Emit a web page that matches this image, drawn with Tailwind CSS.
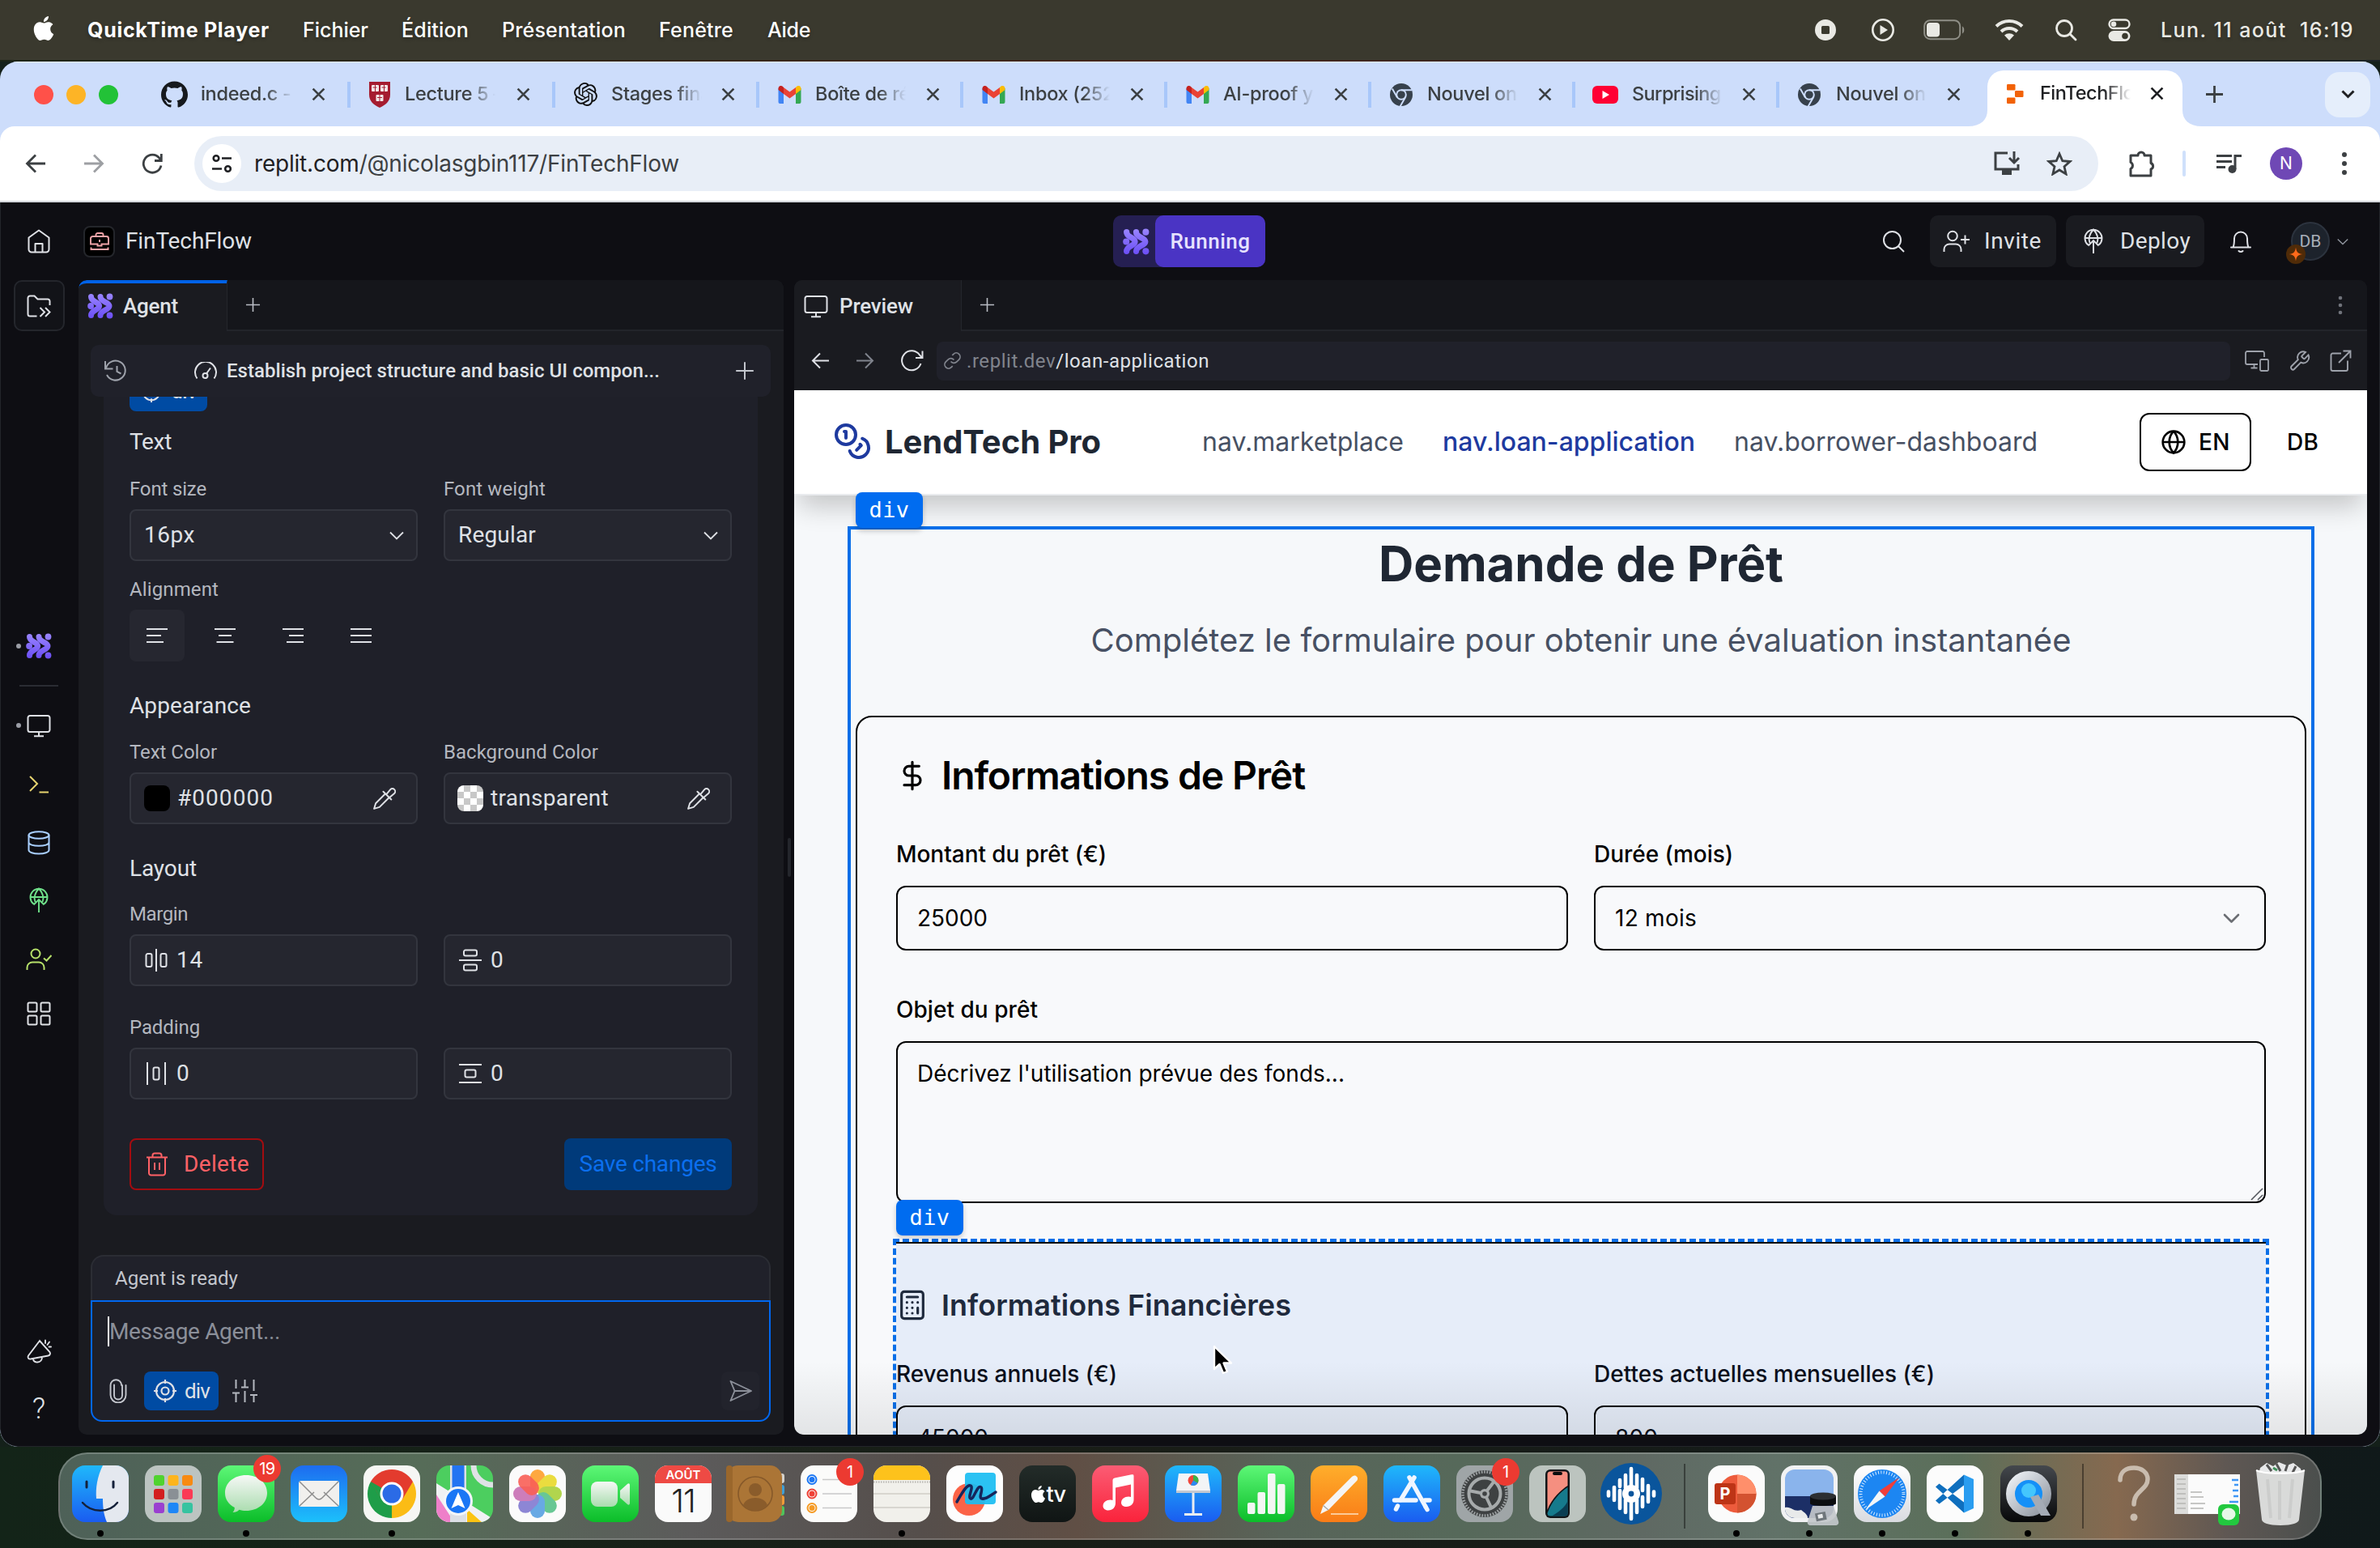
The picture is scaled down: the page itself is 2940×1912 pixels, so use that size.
<!DOCTYPE html>
<html lang="fr">
<head>
<meta charset="utf-8">
<title>FinTechFlow - Replit</title>
<script src="https://cdn.jsdelivr.net/npm/@tailwindcss/browser@4"></script>
</head>
<body class="w-[2940px] h-[1912px] overflow-hidden bg-[#14201a] font-[Inter,sans-serif]">

<!-- Shared symbols -->
<svg class="absolute w-0 h-0" aria-hidden="true">
  <defs>
    <linearGradient id="violet" gradientUnits="userSpaceOnUse" x1="0" y1="0" x2="0" y2="32"><stop offset="0" stop-color="#9a86ff"/><stop offset="1" stop-color="#6a4df5"/></linearGradient>
    <linearGradient id="gBlue" x1="0" y1="0" x2="0" y2="1"><stop offset="0" stop-color="#1d6cf0"/><stop offset="1" stop-color="#1cc0fb"/></linearGradient>
    <linearGradient id="gBlueDown" x1="0" y1="0" x2="0" y2="1"><stop offset="0" stop-color="#1fb8fb"/><stop offset="1" stop-color="#1a5cf0"/></linearGradient>
    <linearGradient id="gGreen" x1="0" y1="0" x2="0" y2="1"><stop offset="0" stop-color="#5df777"/><stop offset="1" stop-color="#0bbd29"/></linearGradient>
    <linearGradient id="gRed" x1="0" y1="0" x2="0" y2="1"><stop offset="0" stop-color="#fb5c74"/><stop offset="1" stop-color="#fa233b"/></linearGradient>
    <linearGradient id="gOrange" x1="0" y1="0" x2="0" y2="1"><stop offset="0" stop-color="#ffae2b"/><stop offset="1" stop-color="#f97c17"/></linearGradient>
    <linearGradient id="gWhite" x1="0" y1="0" x2="0" y2="1"><stop offset="0" stop-color="#ffffff"/><stop offset="1" stop-color="#d9dbe0"/></linearGradient>
    <linearGradient id="gDark" x1="0" y1="0" x2="0" y2="1"><stop offset="0" stop-color="#44484d"/><stop offset="1" stop-color="#070809"/></linearGradient>
    <linearGradient id="gGlass" x1="0" y1="0" x2="0" y2="1"><stop offset="0" stop-color="#f6f8f6"/><stop offset="1" stop-color="#a9dcae"/></linearGradient>
    <linearGradient id="gSilver" x1="0" y1="0" x2="1" y2="1"><stop offset="0" stop-color="#eef1f5"/><stop offset="1" stop-color="#8d949e"/></linearGradient>
    <clipPath id="tile"><rect x="0" y="0" width="70" height="70" rx="16"/></clipPath>
    <symbol id="agent" viewBox="0 0 32 32"><g stroke="url(#violet)" stroke-width="7" stroke-linecap="round" fill="none"><path d="M4.500 4.500C4.500 11 14.600 11 14.600 16S4.500 21 4.500 27.500"/><path d="M16 4.500C16 11 27 11 27 16S16 21 16 27.500"/></g><g fill="url(#violet)"><circle cx="27.500" cy="4.500" r="3.900"/><circle cx="4.100" cy="16" r="3.900"/><circle cx="27.500" cy="27.500" r="3.900"/></g></symbol>
    <symbol id="close" viewBox="0 0 16 16"><path d="M1.500 1.500l13 13M14.500 1.500l-13 13" stroke="currentColor" stroke-width="2.500" fill="none"/></symbol>
    <symbol id="plus" viewBox="0 0 20 20"><path d="M10 1v18M1 10h18" stroke="currentColor" stroke-width="1.700" fill="none"/></symbol>
    <symbol id="gmail" viewBox="0 0 28 22"><path d="M0 3v17a2 2 0 0 0 2 2h4.500V8z" fill="#4285f4"/><path d="M21.500 8v14H26a2 2 0 0 0 2-2V3z" fill="#34a853"/><path d="M21.500 2v8L28 5V3.200C28 .3 24.800-1 22.700.8z" fill="#fbbc04"/><path d="M6.500 10V2l7.500 5.600L21.500 2v8L14 15.500z" fill="#ea4335"/><path d="M0 3.200V5l6.500 5V2L5.300.8C3.200-1 0 .3 0 3.200z" fill="#c5221f"/></symbol>
    <symbol id="chromeMono" viewBox="0 0 28 28"><circle cx="14" cy="14" r="14" fill="#37414c"/><circle cx="14" cy="14" r="6.800" fill="#cdddfb"/><circle cx="14" cy="14" r="4.800" fill="#37414c"/><path d="M14 8.200h13M9 17.200L2.800 6.500M19 17.200l-6.300 11" stroke="#cdddfb" stroke-width="2"/></symbol>
    <symbol id="deploy" viewBox="0 0 32 32"><g fill="none" stroke="currentColor" stroke-width="1.900"><path d="M9.500 20.500A10.500 10.500 0 1 1 22.500 20.500M5.600 12h20.800M11.500 18c-1.500-4-1.500-10 4.500-16.500C22 8 22 14 20.500 18M16 31V15M9.500 21.500L16 15l6.500 6.500"/></g></symbol>
    <symbol id="monitor" viewBox="0 0 30 30"><path d="M4 3h22a2.500 2.500 0 0 1 2.500 2.500v15A2.500 2.500 0 0 1 26 23H4a2.500 2.500 0 0 1-2.500-2.500v-15A2.500 2.500 0 0 1 4 3zM15 23v5M9 28.200h12" fill="none" stroke="currentColor" stroke-width="2"/></symbol>
    <symbol id="chev" viewBox="0 0 18 10"><path d="M1 1l8 8 8-8" fill="none" stroke="currentColor" stroke-width="1.800"/></symbol>
    <symbol id="target" viewBox="0 0 28 28"><g fill="none" stroke="currentColor" stroke-width="2.200"><circle cx="14" cy="14" r="11"/><circle cx="14" cy="14" r="4.500"/><path d="M14 0v5M14 23v5M0 14h5M23 14h5"/></g></symbol>
    <symbol id="picker" viewBox="0 0 28 28"><path d="M15.500 8L4 19.500 2 26l6.500-2L20 12.500M13 5.500l9.500 9.500M16.500 9l5-6a3.300 3.300 0 0 1 4.700 4.700l-6 5" fill="none" stroke="currentColor" stroke-width="1.900" stroke-linejoin="round" stroke-linecap="round"/></symbol>
    <symbol id="github" viewBox="0 0 24 24"><path fill="currentColor" d="M12 .297c-6.630 0-12 5.373-12 12 0 5.303 3.438 9.800 8.205 11.385.6.113.82-.258.82-.577 0-.285-.01-1.040-.015-2.040-3.338.724-4.042-1.610-4.042-1.610C4.422 18.070 3.633 17.700 3.633 17.700c-1.087-.744.084-.729.084-.729 1.205.084 1.838 1.236 1.838 1.236 1.070 1.835 2.809 1.305 3.495.998.108-.776.417-1.305.76-1.605-2.665-.3-5.466-1.332-5.466-5.930 0-1.310.465-2.380 1.235-3.220-.135-.303-.54-1.523.105-3.176 0 0 1.005-.322 3.300 1.230.96-.267 1.980-.399 3-.405 1.020.006 2.040.138 3 .405 2.280-1.552 3.285-1.230 3.285-1.230.645 1.653.24 2.873.12 3.176.765.84 1.230 1.910 1.230 3.220 0 4.610-2.805 5.625-5.475 5.920.42.36.81 1.096.81 2.220 0 1.606-.015 2.896-.015 3.286 0 .315.21.69.825.57C20.565 22.092 24 17.592 24 12.297c0-6.627-5.373-12-12-12"/></symbol>
    <symbol id="apple" viewBox="0 0 24 24"><path fill="currentColor" d="M12.152 6.896c-.948 0-2.415-1.078-3.960-1.040-2.040.027-3.910 1.183-4.961 3.014-2.117 3.675-.546 9.103 1.519 12.090 1.013 1.454 2.208 3.090 3.792 3.039 1.520-.065 2.090-.987 3.935-.987 1.831 0 2.350.987 3.960.948 1.637-.026 2.676-1.480 3.676-2.948 1.156-1.688 1.636-3.325 1.662-3.415-.039-.013-3.182-1.221-3.220-4.857-.026-3.040 2.480-4.494 2.597-4.559-1.429-2.090-3.623-2.324-4.390-2.376-2-.156-3.675 1.090-4.610 1.090zM15.530 3.830c.843-1.012 1.400-2.427 1.245-3.830-1.207.052-2.662.805-3.532 1.818-.78.896-1.454 2.338-1.273 3.714 1.338.104 2.715-.688 3.559-1.701"/></symbol>
  </defs>
</svg>

<!-- macOS menu bar -->
<header class="h-[74px] bg-[#3a392e] flex items-center text-white text-[26px] font-medium leading-none whitespace-nowrap [text-shadow:0_2px_4px_rgba(0,0,0,.3)]">
  <svg class="w-[30px] h-[32px] ml-[39px] -mt-1 shrink-0"><use href="#apple"/></svg>
  <span class="ml-[39px] font-bold text-[25px]" data-w="225">QuickTime Player</span>
  <span class="ml-[41px] text-[25px]" data-w="81">Fichier</span>
  <span class="ml-[41px] text-[25px]" data-w="83">Édition</span>
  <span class="ml-[41px] text-[25px]" data-w="153">Présentation</span>
  <span class="ml-[41px] text-[25px]" data-w="92">Fenêtre</span>
  <span class="ml-[42px] text-[25px]" data-w="53">Aide</span>
  <div class="ml-auto mr-[32px] flex items-center text-[#e9e9e4]">
    <svg class="w-[28px] h-[28px]" viewBox="0 0 28 28"><circle cx="14" cy="14" r="13" fill="currentColor"/><rect x="9" y="9" width="10" height="10" rx="1.500" fill="#3a392e"/></svg>
    <svg class="w-[30px] h-[30px] ml-[42px]" viewBox="0 0 30 30"><circle cx="15" cy="15" r="12.700" fill="none" stroke="currentColor" stroke-width="2.600"/><path d="M11.500 9v12l9.500-6z" fill="currentColor"/></svg>
    <svg class="w-[52px] h-[26px] ml-[35px]" viewBox="0 0 52 26"><rect x="1.200" y="1.200" width="44" height="23" rx="7" fill="none" stroke="#8f8f87" stroke-width="2"/><rect x="4" y="4" width="16" height="17.500" rx="4" fill="currentColor"/><path d="M48 8.500c3 1.500 3 7.500 0 9z" fill="#8f8f87"/></svg>
    <svg class="w-[36px] h-[28px] ml-[36px]" viewBox="0 0 36 28"><g fill="none" stroke="currentColor" stroke-width="4"><path d="M2 9.500a23 23 0 0 1 32 0"/><path d="M8 16a14.500 14.500 0 0 1 20 0"/></g><path d="M18 27l-6-6.500a9 9 0 0 1 12 0z" fill="currentColor"/></svg>
    <svg class="w-[28px] h-[28px] ml-[38px]" viewBox="0 0 28 28"><g fill="none" stroke="currentColor" stroke-width="2.800" stroke-linecap="round"><circle cx="12" cy="12" r="9.500"/><path d="M19 19l7 7"/></g></svg>
    <svg class="w-[28px] h-[28px] ml-[38px]" viewBox="0 0 28 28"><rect x="1.500" y="1.500" width="25" height="10.500" rx="5.200" fill="none" stroke="currentColor" stroke-width="2.400"/><circle cx="7" cy="6.800" r="3.300" fill="currentColor"/><rect x="0.500" y="15" width="27" height="13" rx="6.500" fill="currentColor"/><circle cx="21" cy="21.500" r="3.800" fill="#3a392e"/></svg>
    <span class="ml-[37px] text-[25px] whitespace-pre" data-w="239">Lun. 11 août  16:19</span>
  </div>
</header>
<div class="h-[2px] bg-linear-to-r from-[#1c2416] via-[#45261c] to-[#1b2326]"></div>

<!-- Browser window -->
<div class="h-[1711px] rounded-[22px] overflow-hidden flex flex-col bg-[#cdddfb]">

  <!-- Tab strip -->
  <div class="h-[80px] flex shrink-0 items-center text-[#3c4043] text-[23.500px] font-medium leading-none border-t border-[#e3ecfd] whitespace-nowrap">
    <div class="flex gap-[16px] pl-[42px] w-[180px] shrink-0"><i class="size-[24px] rounded-full bg-[#ff5149]"></i><i class="size-[24px] rounded-full bg-[#fdb426]"></i><i class="size-[24px] rounded-full bg-[#22c237]"></i></div>
    <div class="w-[253px] h-[32px] border-r-4 border-[#a8c7fa] flex items-center shrink-0">
      <svg class="size-[33px] ml-[19px] text-[#16191d]"><use href="#github"/></svg><span class="ml-[16px] w-[114px] h-[32px] leading-[30px] overflow-hidden tracking-[-0.300px] mask-r-from-70% mask-r-to-100%">indeed.c - </span><svg class="size-[17px] ml-[23px]"><use href="#close"/></svg>
    </div>
    <div class="w-[253px] h-[32px] border-r-4 border-[#a8c7fa] flex items-center shrink-0">
      <svg class="w-[26px] h-[32px] ml-[23px]" viewBox="0 0 26 32"><path d="M0 0h26v16c0 8-6 13-13 16C6 29 0 24 0 16z" fill="#a51c30"/><g fill="#f3e9ea"><rect x="3" y="4" width="9" height="8" rx="1"/><rect x="14" y="4" width="9" height="8" rx="1"/><rect x="8.500" y="16" width="9" height="8" rx="1"/></g><g stroke="#a51c30" stroke-width="1"><path d="M7.500 4v8M18.500 4v8M13 16v8M4.500 7h5M15.500 7h5M10 19.500h6"/></g></svg><span class="ml-[18px] w-[112px] h-[32px] leading-[30px] overflow-hidden tracking-[-0.300px] mask-r-from-70% mask-r-to-100%">Lecture 5 –</span><svg class="size-[17px] ml-[26px]"><use href="#close"/></svg>
    </div>
    <div class="w-[252px] h-[32px] border-r-4 border-[#a8c7fa] flex items-center shrink-0">
      <svg class="size-[29px] ml-[23px]" viewBox="0 0 24 24"><path fill="#111" d="M22.2819 9.8211a5.9847 5.9847 0 0 0-.5157-4.9108 6.0462 6.0462 0 0 0-6.5098-2.9A6.0651 6.0651 0 0 0 4.9807 4.1818a5.9847 5.9847 0 0 0-3.9977 2.9 6.0462 6.0462 0 0 0 .7427 7.0966 5.98 5.98 0 0 0 .511 4.9107 6.051 6.051 0 0 0 6.5146 2.9001A5.9847 5.9847 0 0 0 13.2599 24a6.0557 6.0557 0 0 0 5.7718-4.2058 5.9894 5.9894 0 0 0 3.9977-2.9001 6.0557 6.0557 0 0 0-.7475-7.0729zm-9.022 12.6081a4.4755 4.4755 0 0 1-2.8764-1.0408l.1419-.0804 4.7783-2.7582a.7948.7948 0 0 0 .3927-.6813v-6.7369l2.02 1.1686a.071.071 0 0 1 .038.052v5.5826a4.504 4.504 0 0 1-4.4945 4.4944zm-9.6607-4.1254a4.4708 4.4708 0 0 1-.5346-3.0137l.142.0852 4.783 2.7582a.7712.7712 0 0 0 .7806 0l5.8428-3.3685v2.3324a.0804.0804 0 0 1-.0332.0615L9.74 19.9502a4.4992 4.4992 0 0 1-6.1408-1.6464zM2.3408 7.8956a4.485 4.485 0 0 1 2.3655-1.9728V11.6a.7664.7664 0 0 0 .3879.6765l5.8144 3.3543-2.0201 1.1685a.0757.0757 0 0 1-.071 0l-4.8303-2.7865A4.504 4.504 0 0 1 2.3408 7.872zm16.5963 3.8558L13.1038 8.364 15.1192 7.2a.0757.0757 0 0 1 .071 0l4.8303 2.7913a4.4944 4.4944 0 0 1-.6765 8.1042v-5.6772a.79.79 0 0 0-.407-.667zm2.0107-3.0231l-.142-.0852-4.7735-2.7818a.7759.7759 0 0 0-.7854 0L9.409 9.2297V6.8974a.0662.0662 0 0 1 .0284-.0615l4.8303-2.7866a4.4992 4.4992 0 0 1 6.6802 4.66zM8.3065 12.863l-2.02-1.1638a.0804.0804 0 0 1-.038-.0567V6.0742a4.4992 4.4992 0 0 1 7.3757-3.4537l-.142.0805L8.704 5.459a.7948.7948 0 0 0-.3927.6813zm1.0976-2.3654l2.602-1.4998 2.6069 1.4998v2.9994l-2.5974 1.4997-2.6067-1.4997Z"/></svg><span class="ml-[17px] w-[112px] h-[32px] leading-[30px] overflow-hidden tracking-[-0.300px] mask-r-from-70% mask-r-to-100%">Stages fina</span><svg class="size-[17px] ml-[24px]"><use href="#close"/></svg>
    </div>
    <div class="w-[252px] h-[32px] border-r-4 border-[#a8c7fa] flex items-center shrink-0">
      <svg class="w-[29px] h-[22px] ml-[23px]"><use href="#gmail"/></svg><span class="ml-[17px] w-[112px] h-[32px] leading-[30px] overflow-hidden tracking-[-0.300px] mask-r-from-70% mask-r-to-100%">Boîte de ré</span><svg class="size-[17px] ml-[25px]"><use href="#close"/></svg>
    </div>
    <div class="w-[252px] h-[32px] border-r-4 border-[#a8c7fa] flex items-center shrink-0">
      <svg class="w-[29px] h-[22px] ml-[23px]"><use href="#gmail"/></svg><span class="ml-[17px] w-[112px] h-[32px] leading-[30px] overflow-hidden tracking-[-0.300px] mask-r-from-70% mask-r-to-100%">Inbox (252)</span><svg class="size-[17px] ml-[25px]"><use href="#close"/></svg>
    </div>
    <div class="w-[252px] h-[32px] border-r-4 border-[#a8c7fa] flex items-center shrink-0">
      <svg class="w-[29px] h-[22px] ml-[23px]"><use href="#gmail"/></svg><span class="ml-[17px] w-[112px] h-[32px] leading-[30px] overflow-hidden tracking-[-0.300px] mask-r-from-70% mask-r-to-100%">AI-proof yo</span><svg class="size-[17px] ml-[25px]"><use href="#close"/></svg>
    </div>
    <div class="w-[252px] h-[32px] border-r-4 border-[#a8c7fa] flex items-center shrink-0">
      <svg class="size-[28px] ml-[23px]"><use href="#chromeMono"/></svg><span class="ml-[18px] w-[112px] h-[32px] leading-[30px] overflow-hidden tracking-[-0.300px] mask-r-from-70% mask-r-to-100%">Nouvel ong</span><svg class="size-[17px] ml-[25px]"><use href="#close"/></svg>
    </div>
    <div class="w-[252px] h-[32px] border-r-4 border-[#a8c7fa] flex items-center shrink-0">
      <svg class="w-[32px] h-[22px] ml-[21px]" viewBox="0 0 32 22"><rect width="32" height="22" rx="6" fill="#ff0033"/><path d="M12.500 6v10l8.500-5z" fill="#fff"/></svg><span class="ml-[17px] w-[112px] h-[32px] leading-[30px] overflow-hidden tracking-[-0.600px] mask-r-from-70% mask-r-to-100%">Surprising</span><svg class="size-[17px] ml-[24px]"><use href="#close"/></svg>
    </div>
    <div class="w-[233px] h-[32px] flex items-center shrink-0">
      <svg class="size-[28px] ml-[23px]"><use href="#chromeMono"/></svg><span class="ml-[19px] w-[112px] h-[32px] leading-[30px] overflow-hidden tracking-[-0.300px] mask-r-from-70% mask-r-to-100%">Nouvel ong</span><svg class="size-[17px] ml-[25px]"><use href="#close"/></svg>
    </div>
    <svg class="w-[24px] h-[20px] self-end shrink-0" viewBox="0 0 24 20"><path d="M24 0c0 12-8 20-24 20h24z" fill="#fff"/></svg>
    <div class="w-[241px] h-[69px] self-end rounded-t-[20px] bg-white flex items-center shrink-0 text-[#1f2023]">
      <svg class="w-[21px] h-[24px] ml-[24px] -mt-[12px]" viewBox="0 0 21 24"><g fill="#f26207"><rect width="10.500" height="7.500" rx="1.200"/><rect x="10" y="8" width="10.500" height="8" rx="1.200"/><rect y="16.500" width="10.500" height="7.500" rx="1.200"/></g></svg><span class="ml-[20px] -mt-[12px] w-[112px] h-[32px] leading-[30px] overflow-hidden tracking-[-0.500px] mask-r-from-70% mask-r-to-100%">FinTechFlow</span><svg class="size-[17px] ml-[24px] -mt-[12px]"><use href="#close"/></svg>
    </div>
    <svg class="w-[24px] h-[20px] self-end shrink-0" viewBox="0 0 24 20"><path d="M0 0c0 12 8 20 24 20H0z" fill="#fff"/></svg>
    <svg class="w-[21px] h-[21px] ml-[5px]" viewBox="0 0 21 21"><path d="M10.500 0v21M0 10.500h21" stroke="#3c4043" stroke-width="2.800"/></svg>
    <div class="ml-auto mr-[12px] w-[56px] h-[56px] rounded-[18px] bg-[#e5eefb] flex items-center justify-center"><svg class="w-[17px] h-[11px]" viewBox="0 0 17 11"><path d="M1.500 1.500l7 7 7-7" fill="none" stroke="#1f2023" stroke-width="3"/></svg></div>
  </div>

  <!-- Address bar -->
  <div class="h-[92px] shrink-0 bg-white rounded-t-[18px] flex items-center text-[#3c4043]">
    <svg class="w-[26px] h-[24px] ml-[31px]" viewBox="0 0 26 24"><path d="M25 12H3M13 1.500L2.500 12 13 22.500" fill="none" stroke="#3c4043" stroke-width="2.800"/></svg>
    <svg class="w-[26px] h-[24px] ml-[46px]" viewBox="0 0 26 24"><path d="M1 12h22M13 1.500L23.500 12 13 22.500" fill="none" stroke="#9d9fa3" stroke-width="2.800"/></svg>
    <svg class="w-[26px] h-[26px] ml-[46px]" viewBox="0 0 26 26"><path d="M24 15.500A11 11 0 1 1 22 6.500l2 2.500M24.300 1v8.500H16" fill="none" stroke="#3c4043" stroke-width="2.800"/></svg>
    <div class="ml-[39px] w-[2352px] h-[68px] rounded-full bg-[#e8eef7] flex items-center">
      <div class="ml-[10px] size-[48px] rounded-full bg-white flex items-center justify-center"><svg class="w-[24px] h-[24px]" viewBox="0 0 24 24"><g fill="none" stroke="#1f2023" stroke-width="2.600"><circle cx="5" cy="5.500" r="3.300"/><path d="M12 5.500h12M0 18.500h12"/><circle cx="19.500" cy="18.500" r="3.300"/></g></svg></div>
      <div class="ml-[16px] text-[28px] leading-[36px] whitespace-nowrap" data-w="525"><span class="text-[#1f2023]">replit.com</span>/@nicolasgbin117/FinTechFlow</div>
      <svg class="ml-auto w-[34px] h-[30px]" viewBox="0 0 34 30"><path d="M18 2H3v20h28v-6" fill="none" stroke="#3c4043" stroke-width="3"/><path d="M11 23h12v6H11z" fill="#3c4043"/><path d="M26 0v13M20 8l6 6 6-6" fill="none" stroke="#3c4043" stroke-width="3"/></svg>
      <svg class="ml-[32px] mr-[32px] w-[32px] h-[30px]" viewBox="0 0 32 30"><path d="M16 3l3.800 8.700 9.200.8-7 6.200 2.100 9.200L16 23l-8.100 4.900L10 18.700l-7-6.200 9.200-.8z" fill="none" stroke="#3c4043" stroke-width="2.800"/></svg>
    </div>
    <svg class="ml-[37px] w-[34px] h-[34px]" viewBox="0 0 34 34"><path d="M3 7h9a4 4 0 0 1 8 0h8v9.500a4 4 0 0 1 0 7.500v8H3v-8.500a4.500 4.500 0 0 0 0-8z" fill="none" stroke="#3c4043" stroke-width="3" stroke-linejoin="round"/></svg>
    <div class="ml-[33px] w-[4px] h-[32px] rounded bg-[#cfe0fb]"></div>
    <svg class="ml-[37px] w-[32px] h-[26px]" viewBox="0 0 32 26"><path d="M1 3.500h19M1 10.500h19M1 17.500h11" stroke="#3c4043" stroke-width="2.800"/><circle cx="20.500" cy="20" r="5" fill="#3c4043"/><path d="M24 20V3.500h8" fill="none" stroke="#3c4043" stroke-width="3"/></svg>
    <div class="ml-[35px] size-[40px] rounded-full bg-[#6f48b5] text-white text-[21px] flex items-center justify-center">N</div>
    <svg class="ml-[48px] w-[8px] h-[28px]" viewBox="0 0 8 28"><g fill="#3c4043"><circle cx="4" cy="3" r="3"/><circle cx="4" cy="14" r="3"/><circle cx="4" cy="25" r="3"/></g></svg>
  </div>
  <div class="h-[2px] shrink-0 bg-[#d3d6db]"></div>

  <!-- Replit workspace -->
  <div class="flex-1 min-h-0 bg-[#0e0e13] rounded-b-[22px] border-x border-b border-[#23252a] font-[Roboto,sans-serif] text-[#dfe1e6] flex flex-col">

    <!-- Workspace header -->
    <div class="h-[96px] shrink-0 flex items-center text-[28px] leading-none whitespace-nowrap">
      <svg class="w-[28px] h-[30px] ml-[33px] shrink-0" viewBox="0 0 28 30"><path d="M1.500 10.500L14 1.500l12.500 9V25a3.500 3.500 0 0 1-3.500 3.500H5A3.500 3.500 0 0 1 1.500 25zM9.500 28V18h9v10" fill="none" stroke="currentColor" stroke-width="2" stroke-linejoin="round"/></svg>
      <div class="ml-[41px] w-[39px] h-[39px] shrink-0 rounded-[8px] bg-black border-2 border-[#24262b] flex items-center justify-center"><svg class="w-[24px] h-[22px]" viewBox="0 0 24 22"><path d="M7.500 5V3A2 2 0 0 1 9.500 1h5a2 2 0 0 1 2 2v2M3.500 5h17A2.500 2.500 0 0 1 23 7.500v7h-8.500v2h-5v-2H1v-7A2.500 2.500 0 0 1 3.500 5zM1.500 18.500V21h21v-2.500M12 9v3" fill="none" stroke="#f0a3a8" stroke-width="1.900"/></svg></div>
      <span class="ml-[13px]" data-w="156">FinTechFlow</span>
      <div class="ml-[1064px] w-[188px] h-[64px] rounded-[10px] bg-[#251f52] flex shrink-0">
        <div class="w-[52px] flex items-center justify-end"><svg class="w-[33px] h-[33px] mr-[7px] shrink-0"><use href="#agent"/></svg></div>
        <div class="flex-1 rounded-[10px] bg-[#4a34c4] flex items-center justify-center font-medium text-[26px] text-[#e6e2ff]"><span data-w="99">Running</span></div>
      </div>
      <svg class="w-[28px] h-[28px] ml-[762px] shrink-0" viewBox="0 0 28 28"><g fill="none" stroke="currentColor" stroke-width="2"><circle cx="12.500" cy="12.500" r="10.500"/><path d="M20 20l7 7"/></g></svg>
      <div class="ml-[31px] w-[156px] h-[64px] shrink-0 rounded-[10px] bg-[#1a1b20] flex items-center pl-[16px]"><svg class="w-[33px] h-[28px] shrink-0" viewBox="0 0 33 28"><g fill="none" stroke="currentColor" stroke-width="2"><circle cx="12" cy="7.500" r="5.800"/><path d="M1.500 27v-3a6.500 6.500 0 0 1 6.500-6.500h8a6.500 6.500 0 0 1 6.500 6.500v3M27.500 6.500v11M22 12h11"/></g></svg><span class="ml-[18px]" data-w="71">Invite</span></div>
      <div class="ml-[12px] w-[171px] h-[64px] shrink-0 rounded-[10px] bg-[#1a1b20] flex items-center pl-[18px]"><svg class="w-[32px] h-[32px] shrink-0"><use href="#deploy"/></svg><span class="ml-[17px]" data-w="87">Deploy</span></div>
      <svg class="w-[28px] h-[30px] ml-[31px] shrink-0" viewBox="0 0 28 30"><path d="M2 22.500h24M4.500 22.500c1.500-3 1.500-6 1.500-11a8 8 0 0 1 16 0c0 5 0 8 1.500 11M11.500 27a3.500 3.500 0 0 0 5 0" fill="none" stroke="currentColor" stroke-width="2" stroke-linecap="round"/></svg>
      <div class="relative ml-[48px] size-[48px] shrink-0 rounded-full bg-[#1d232c] border-2 border-[#2c333e] text-[#a9afb8] text-[21px] flex items-center justify-center">DB<svg class="absolute -left-[8px] top-[26px] size-[24px]" viewBox="0 0 24 24"><circle cx="12" cy="12" r="12" fill="#4f2b08"/><path d="M12 3.500c.8 6 2.500 7.700 8.500 8.500-6 .8-7.700 2.500-8.500 8.500-.8-6-2.500-7.700-8.500-8.500 6-.8 7.700-2.500 8.500-8.500z" fill="#ff6a1a"/></svg></div>
      <svg class="w-[14px] h-[9px] ml-[9px] shrink-0 text-[#8f949d]"><use href="#chev"/></svg>
    </div>

    <div class="flex flex-1 min-h-0">
      <!-- Tool rail -->
      <nav class="w-[96px] shrink-0 flex flex-col items-center pr-[2px]">
        <div class="w-[63px] h-[63px] rounded-[10px] border-2 border-[#24262c] bg-[#121318] flex items-center justify-center"><svg class="w-[30px] h-[28px]" viewBox="0 0 30 28"><path d="M12.500 26.500H4A2.500 2.500 0 0 1 1.500 24V4A2.500 2.500 0 0 1 4 1.500h5.500l4 4H26A2.500 2.500 0 0 1 28.500 8v5M16.500 16l5.500 5.500-5.500 5.500M23 16l5.500 5.500L23 27" fill="none" stroke="currentColor" stroke-width="2"/></svg></div>
        <div class="mt-[373px] flex items-center"><i class="size-[6px] rounded-full bg-[#9a9da5] mr-[6px] -ml-[12px]"></i><svg class="w-[32px] h-[32px]"><use href="#agent"/></svg></div>
        <div class="mt-[32px] w-[48px] h-[2px] bg-[#2a2c33]"></div>
        <div class="mt-[33px] flex items-center"><i class="size-[6px] rounded-full bg-[#9a9da5] mr-[7px] -ml-[13px]"></i><svg class="w-[30px] h-[30px]"><use href="#monitor"/></svg></div>
        <svg class="mt-[47px] w-[26px] h-[22px]" viewBox="0 0 26 22"><path d="M2 1l9 9-9 9M13.500 20.500H25" fill="none" stroke="#e6d36f" stroke-width="2"/></svg>
        <svg class="mt-[46px] w-[28px] h-[30px]" viewBox="0 0 28 30"><g fill="none" stroke="#a9cfff" stroke-width="2"><ellipse cx="14" cy="5.500" rx="12.500" ry="4.300"/><path d="M1.500 5.500v18.500c0 2.500 5.500 4.500 12.500 4.500s12.500-2 12.500-4.500V5.500M1.500 14.500c0 2.500 5.500 4.300 12.500 4.300s12.500-1.800 12.500-4.300"/></g></svg>
        <svg class="mt-[40px] w-[32px] h-[32px] text-[#6fe08a]"><use href="#deploy"/></svg>
        <svg class="mt-[43px] w-[32px] h-[28px]" viewBox="0 0 32 28"><g fill="none" stroke="#b6e06a" stroke-width="2"><circle cx="12" cy="7" r="5.500"/><path d="M1.500 27v-3A6.500 6.500 0 0 1 8 17.500h8a6.500 6.500 0 0 1 6.500 6.500v3M22 12.500l3.500 3L31.500 9"/></g></svg>
        <svg class="mt-[38px] w-[30px] h-[30px]" viewBox="0 0 30 30"><g fill="none" stroke="currentColor" stroke-width="2"><rect x="1.500" y="1.500" width="11" height="11" rx="1.500"/><rect x="17.500" y="1.500" width="11" height="11" rx="1.500"/><rect x="1.500" y="17.500" width="11" height="11" rx="1.500"/><rect x="17.500" y="17.500" width="11" height="11" rx="1.500"/></g></svg>
        <svg class="mt-[387px] w-[32px] h-[30px]" viewBox="0 0 32 30"><g fill="none" stroke="currentColor" stroke-width="1.900" stroke-linecap="round"><path d="M17 2L3 20.500c-1.500 2.500.5 4.500 3 4l21.500-4c2.500-.5 3-3 2-4.500zM9 24.500c0 5.500 10.500 6 11-2M24 1.500V5M26.500 7L29 3.500M28.500 9.500h2.500"/></g></svg>
        <span class="mt-[36px] text-[36px] leading-[40px] font-light">?</span>
      </nav>

      <!-- Agent pane -->
      <section class="w-[871px] h-[1426px] shrink-0 rounded-[10px] bg-[#1a1b20] flex flex-col overflow-hidden">
        <div class="h-[63px] shrink-0 flex bg-[#15161b]">
          <div class="w-[184px] h-[63px] bg-[#1a1b20] border-t-4 border-t-[#0062e8] border-r border-r-[#24262c] rounded-tl-[10px] flex items-center pl-[11px] pb-[3px] font-medium text-[26px]"><svg class="w-[32px] h-[32px] shrink-0"><use href="#agent"/></svg><span class="ml-[12px] leading-none" data-w="68">Agent</span></div>
          <div class="flex-1 border-b-2 border-[#22242a] flex items-center"><svg class="w-[19px] h-[19px] ml-[22px] text-[#b9bcc4]"><use href="#plus"/></svg></div>
        </div>
        <div class="mt-[17px] mx-[15px] w-[840px] h-[64px] shrink-0 rounded-[10px] bg-[#20212a] flex items-center">
          <svg class="ml-[16px] w-[30px] h-[28px] shrink-0 text-[#9ea2ab]" viewBox="0 0 30 28"><path d="M2 2v9.500h9.500M3 11A12 12 0 1 1 4 19M16.500 8v7l5 2.500" fill="none" stroke="currentColor" stroke-width="2"/></svg>
          <svg class="ml-[81px] w-[30px] h-[22px] shrink-0" viewBox="0 0 30 22"><path d="M4.500 20.500a13 13 0 1 1 21 0M16 14.500L21 7.500" fill="none" stroke="currentColor" stroke-width="2"/><circle cx="14.500" cy="17" r="3" fill="none" stroke="currentColor" stroke-width="2"/></svg>
          <span class="ml-[11px] text-[24px] font-medium leading-none whitespace-nowrap" data-w="535">Establish project structure and basic UI compon...</span>
          <svg class="w-[24px] h-[24px] ml-[93px] shrink-0 text-[#c3c6cd]"><use href="#plus"/></svg>
        </div>

        <!-- Element editor card -->
        <div class="ml-[31px] w-[808px] h-[1011px] shrink-0 rounded-b-[16px] bg-[#1f2029] px-[32px] flex flex-col leading-none whitespace-nowrap">
          <div class="h-[18px] overflow-hidden flex items-end"><div class="w-[96px] h-[48px] rounded-[8px] bg-[#004ba3] flex items-center pl-[14px] text-[24px] font-medium shrink-0"><svg class="size-[26px] shrink-0"><use href="#target"/></svg><span class="ml-[12px]" data-w="31">div</span></div></div>
          <div class="mt-[18px] h-[40px] flex items-center text-[28px]"><span data-w="52">Text</span></div>
          <div class="mt-[26px] h-[24px] flex items-center text-[24px] text-[#b4b7bf]"><span class="w-[388px]"><span data-w="95">Font size</span></span><span data-w="126">Font weight</span></div>
          <div class="mt-[13px] flex gap-[32px] text-[28px]">
            <div class="w-[356px] h-[64px] rounded-[8px] border-2 border-[#33353e] bg-[#25262f] flex items-center justify-between pl-[16px] pr-[15px]"><span data-w="63">16px</span><svg class="w-[18px] h-[11px]"><use href="#chev"/></svg></div>
            <div class="w-[356px] h-[64px] rounded-[8px] border-2 border-[#33353e] bg-[#25262f] flex items-center justify-between pl-[16px] pr-[15px]"><span data-w="96">Regular</span><svg class="w-[18px] h-[11px]"><use href="#chev"/></svg></div>
          </div>
          <div class="mt-[23px] h-[24px] flex items-center text-[24px] text-[#b4b7bf]"><span data-w="110">Alignment</span></div>
          <div class="mt-[13px] flex gap-[16px]">
            <div class="w-[68px] h-[64px] rounded-[8px] bg-[#262730] flex items-center justify-center"><svg class="w-[26px] h-[20px]" viewBox="0 0 26 20"><path d="M0 2h26M0 10h18M0 18h21" stroke="currentColor" stroke-width="2.200"/></svg></div>
            <div class="w-[68px] h-[64px] flex items-center justify-center"><svg class="w-[26px] h-[20px]" viewBox="0 0 26 20"><path d="M0 2h26M5 10h16M2.500 18h21" stroke="currentColor" stroke-width="2.200"/></svg></div>
            <div class="w-[68px] h-[64px] flex items-center justify-center"><svg class="w-[26px] h-[20px]" viewBox="0 0 26 20"><path d="M0 2h26M8 10h18M5 18h21" stroke="currentColor" stroke-width="2.200"/></svg></div>
            <div class="w-[68px] h-[64px] flex items-center justify-center"><svg class="w-[26px] h-[20px]" viewBox="0 0 26 20"><path d="M0 2h26M0 10h26M0 18h26" stroke="currentColor" stroke-width="2.200"/></svg></div>
          </div>
          <div class="mt-[35px] h-[40px] flex items-center text-[28px]"><span data-w="150">Appearance</span></div>
          <div class="mt-[25px] h-[24px] flex items-center text-[24px] text-[#b4b7bf]"><span class="w-[388px]"><span data-w="108">Text Color</span></span><span data-w="191">Background Color</span></div>
          <div class="mt-[13px] flex gap-[32px] text-[28px]">
            <div class="w-[356px] h-[64px] rounded-[8px] border-2 border-[#33353e] bg-[#25262f] flex items-center pl-[16px] pr-[25px]"><i class="size-[32px] rounded-[8px] bg-black"></i><span class="ml-[9px]" data-w="119">#000000</span><svg class="ml-auto size-[29px]"><use href="#picker"/></svg></div>
            <div class="w-[356px] h-[64px] rounded-[8px] border-2 border-[#33353e] bg-[#25262f] flex items-center pl-[15px] pr-[25px]"><i class="size-[32px] rounded-[8px] bg-[#fff] bg-[repeating-conic-gradient(#c8c8c8_0_25%,#fff_0_50%)] bg-[length:16px_16px]"></i><span class="ml-[9px]" data-w="146">transparent</span><svg class="ml-auto size-[29px]"><use href="#picker"/></svg></div>
          </div>
          <div class="mt-[35px] h-[40px] flex items-center text-[28px]"><span data-w="83">Layout</span></div>
          <div class="mt-[24px] h-[24px] flex items-center text-[24px] text-[#b4b7bf]"><span data-w="72">Margin</span></div>
          <div class="mt-[13px] flex gap-[32px] text-[28px]">
            <div class="w-[356px] h-[64px] rounded-[8px] border-2 border-[#33353e] bg-[#25262f] flex items-center pl-[17px]"><svg class="w-[28px] h-[28px]" viewBox="0 0 28 28"><path d="M14 0v28M3.500 6h3a2 2 0 0 1 2 2v12a2 2 0 0 1-2 2h-3a2 2 0 0 1-2-2V8a2 2 0 0 1 2-2zM21.500 6h3a2 2 0 0 1 2 2v12a2 2 0 0 1-2 2h-3a2 2 0 0 1-2-2V8a2 2 0 0 1 2-2z" fill="none" stroke="currentColor" stroke-width="2"/></svg><span class="ml-[11px]" data-w="33">14</span></div>
            <div class="w-[356px] h-[64px] rounded-[8px] border-2 border-[#33353e] bg-[#25262f] flex items-center pl-[17px]"><svg class="w-[28px] h-[28px]" viewBox="0 0 28 28"><path d="M0 14h28M6 3.500v3a2 2 0 0 0 2 2h12a2 2 0 0 0 2-2v-3a2 2 0 0 0-2-2H8a2 2 0 0 0-2 2zM6 21.500v3a2 2 0 0 0 2 2h12a2 2 0 0 0 2-2v-3a2 2 0 0 0-2-2H8a2 2 0 0 0-2 2z" fill="none" stroke="currentColor" stroke-width="2"/></svg><span class="ml-[11px]">0</span></div>
          </div>
          <div class="mt-[39px] h-[24px] flex items-center text-[24px] text-[#b4b7bf]"><span data-w="87">Padding</span></div>
          <div class="mt-[13px] flex gap-[32px] text-[28px]">
            <div class="w-[356px] h-[64px] rounded-[8px] border-2 border-[#33353e] bg-[#25262f] flex items-center pl-[17px]"><svg class="w-[28px] h-[28px]" viewBox="0 0 28 28"><path d="M3 0v28M25 0v28M12.500 6.500h3a2 2 0 0 1 2 2v11a2 2 0 0 1-2 2h-3a2 2 0 0 1-2-2v-11a2 2 0 0 1 2-2z" fill="none" stroke="currentColor" stroke-width="2"/></svg><span class="ml-[11px]">0</span></div>
            <div class="w-[356px] h-[64px] rounded-[8px] border-2 border-[#33353e] bg-[#25262f] flex items-center pl-[17px]"><svg class="w-[28px] h-[28px]" viewBox="0 0 28 28"><path d="M0 3h28M0 25h28M7.500 11.500v5a2 2 0 0 0 2 2h9a2 2 0 0 0 2-2v-5a2 2 0 0 0-2-2h-9a2 2 0 0 0-2 2z" fill="none" stroke="currentColor" stroke-width="2"/></svg><span class="ml-[11px]">0</span></div>
          </div>
          <div class="mt-[48px] flex justify-between text-[28px]">
            <div class="w-[166px] h-[64px] rounded-[8px] border-2 border-[#a30c10] text-[#ff6166] flex items-center pl-[19px]"><svg class="w-[26px] h-[30px] shrink-0" viewBox="0 0 26 30"><path d="M0 6.500h26M7.500 6V4A2.500 2.500 0 0 1 10 1.500h6A2.500 2.500 0 0 1 18.500 4v2M3 6.500V26a2.500 2.500 0 0 0 2.500 2.500h15A2.500 2.500 0 0 0 23 26V6.500M10 13v9M16 13v9" fill="none" stroke="currentColor" stroke-width="2"/></svg><span class="ml-[20px]" data-w="81">Delete</span></div>
            <div class="w-[207px] h-[64px] rounded-[8px] bg-[#003a7a] text-[#0b6fef] flex items-center justify-center"><span data-w="170">Save changes</span></div>
          </div>
        </div>

        <!-- Composer -->
        <div class="mt-[49px] ml-[15px] w-[840px] h-[56px] shrink-0 rounded-t-[16px] border-2 border-b-0 border-[#2b2d34] bg-[#20212a] flex items-center pl-[28px] text-[24px] leading-none text-[#c3c6cd]"><span data-w="152">Agent is ready</span></div>
        <div class="ml-[15px] w-[840px] h-[150px] shrink-0 rounded-b-[14px] border-2 border-[#0067f0] bg-[#1f2029] flex flex-col">
          <div class="mt-[18px] ml-[19px] h-[37px] border-l-2 border-white text-[28px] leading-[38px] text-[#8b8f99]"><span data-w="211">Message Agent...</span></div>
          <div class="mt-[31px] h-[48px] flex items-center leading-none">
            <svg class="ml-[21px] w-[22px] h-[30px] text-[#c3c6cd]" viewBox="0 0 22 30"><path d="M16 8v12.500a5 5 0 0 1-10 0V7.500M20.500 8v12a9.500 9.500 0 0 1-19 0V8a6.800 6.800 0 0 1 13.600 0" fill="none" stroke="currentColor" stroke-width="1.900" stroke-linecap="round"/></svg>
            <div class="ml-[21px] w-[92px] h-[48px] rounded-[8px] bg-[#004ba3] flex items-center pl-[12px] text-[26px]"><svg class="size-[28px]"><use href="#target"/></svg><span class="ml-[10px]" data-w="31">div</span></div>
            <svg class="ml-[17px] w-[31px] h-[28px] text-[#b4b7bf]" viewBox="0 0 31 28"><path d="M4.500 0v11M4.500 16v12M0 16.500h9M15.500 0v9.500M11 9.500h9M15.500 14v14M26.500 0v14M26.500 19v9M22 19h9" fill="none" stroke="currentColor" stroke-width="2"/></svg>
            <div class="ml-auto mr-[12px] w-[47px] h-[48px] rounded-[8px] bg-[#22232c] flex items-center justify-center text-[#8b8f99]"><svg class="w-[28px] h-[28px]" viewBox="0 0 28 28"><path d="M1.500 2L27 14 1.500 26l5-12zM6.500 14H27" fill="none" stroke="currentColor" stroke-width="1.900" stroke-linejoin="round"/></svg></div>
          </div>
        </div>
      </section>

      <!-- Splitter -->
      <div class="w-[13px] shrink-0 flex justify-center pt-[689px]"><i class="w-[4px] h-[48px] rounded bg-[#24262c]"></i></div>

      <!-- Preview pane -->
      <section class="w-[1943px] h-[1426px] shrink-0 rounded-[10px] bg-[#1a1b20] flex flex-col overflow-hidden leading-none whitespace-nowrap">
        <div class="h-[63px] shrink-0 flex bg-[#15161b]">
          <div class="w-[207px] bg-[#1a1b20] border-r border-[#24262c] flex items-center pl-[12px] text-[26px] font-medium"><svg class="w-[30px] h-[30px] shrink-0"><use href="#monitor"/></svg><span class="ml-[14px]" data-w="91">Preview</span></div>
          <div class="flex-1 border-b-2 border-[#22242a] flex items-center justify-between pl-[22px] pr-[30px]"><svg class="w-[19px] h-[19px] text-[#b9bcc4]"><use href="#plus"/></svg><svg class="w-[6px] h-[24px]" viewBox="0 0 6 24"><g fill="#70737b"><circle cx="3" cy="3" r="2.300"/><circle cx="3" cy="12" r="2.300"/><circle cx="3" cy="21" r="2.300"/></g></svg></div>
        </div>
        <div class="h-[73px] shrink-0 flex items-center text-[24px]">
          <svg class="ml-[21px] w-[22px] h-[21px] shrink-0" viewBox="0 0 22 21"><path d="M22 10.500H2M11 1.500l-9 9 9 9" fill="none" stroke="currentColor" stroke-width="2"/></svg>
          <svg class="ml-[34px] w-[22px] h-[21px] shrink-0 text-[#80848d]" viewBox="0 0 22 21"><path d="M0 10.500h20M11 1.500l9 9-9 9" fill="none" stroke="currentColor" stroke-width="2"/></svg>
          <svg class="ml-[32px] w-[29px] h-[27px] shrink-0" viewBox="0 0 29 27"><path d="M25.500 17A12 12 0 1 1 24 6.500l3 3.500M27.500 1.500V10H19" fill="none" stroke="currentColor" stroke-width="2"/></svg>
          <div class="ml-[16px] w-[1598px] h-[48px] shrink-0 rounded-[8px] bg-[#20212a] flex items-center"><svg class="ml-[8px] w-[23px] h-[23px] text-[#80848d]" viewBox="0 0 24 24"><path d="M10 13a5 5 0 0 0 7.540.54l3-3a5 5 0 0 0-7.070-7.070l-1.720 1.710M14 11a5 5 0 0 0-7.540-.54l-3 3a5 5 0 0 0 7.070 7.070l1.710-1.710" fill="none" stroke="currentColor" stroke-width="1.800"/></svg><div class="ml-[6px] text-[#80848d]" data-w="300">.replit.dev<span class="text-[#dfe1e6]">/loan-application</span></div></div>
          <svg class="ml-[18px] w-[30px] h-[26px] shrink-0 text-[#9ea2ab]" viewBox="0 0 30 26"><path d="M24 8V3a2 2 0 0 0-2-2H3a2 2 0 0 0-2 2v12a2 2 0 0 0 2 2h13M11.500 17v4.500M7.500 21.500h8M20.500 11h7a1.500 1.500 0 0 1 1.500 1.500v11a1.500 1.500 0 0 1-1.500 1.500h-7a1.500 1.500 0 0 1-1.500-1.500v-11a1.500 1.500 0 0 1 1.500-1.500z" fill="none" stroke="currentColor" stroke-width="1.800"/></svg>
          <svg class="ml-[23px] w-[29px] h-[28px] shrink-0 text-[#9ea2ab]" viewBox="0 0 24 24"><path d="M14.700 6.300a1 1 0 0 0 0 1.400l1.600 1.600a1 1 0 0 0 1.400 0l3.770-3.770a6 6 0 0 1-7.940 7.940l-6.910 6.910a2.120 2.120 0 0 1-3-3l6.910-6.910a6 6 0 0 1 7.940-7.940z" fill="none" stroke="currentColor" stroke-width="1.600"/></svg>
          <svg class="ml-[23px] w-[27px] h-[27px] shrink-0 text-[#9ea2ab]" viewBox="0 0 27 27"><path d="M14 4.500H3.500a2 2 0 0 0-2 2V24a2 2 0 0 0 2 2H20a2 2 0 0 0 2-2V13.500M11 16L25 2M16.500 1.500h9v9" fill="none" stroke="currentColor" stroke-width="1.900"/></svg>
        </div>

        <!-- LendTech Pro page -->
        <div class="relative flex-1 min-h-0 bg-[#f6f8fa] rounded-b-[12px] overflow-hidden font-[Inter,sans-serif] text-black">
          <div class="relative h-[130px] bg-white border-b-2 border-[#e9ebee] shadow-[0_20px_30px_-6px_rgba(0,0,0,.2)] flex items-center text-[32px] text-[#475063]">
            <svg class="ml-[48px] w-[48px] h-[48px] shrink-0 text-[#1e3a9f] -mt-[2px]" viewBox="0 0 24 24"><g fill="none" stroke="currentColor" stroke-width="2" stroke-linecap="round" stroke-linejoin="round"><circle cx="8" cy="8" r="6"/><path d="M18.090 10.370A6 6 0 1 1 10.340 18M7 6h1v4M16.710 13.880l.7.71-2.820 2.820"/></g></svg>
            <span class="ml-[16px] text-[40px] font-bold text-[#1f2733]" data-w="267">LendTech Pro</span>
            <span class="ml-[125px]" data-w="249">nav.marketplace</span>
            <span class="ml-[48px] font-medium text-[#1e3a9f]" data-w="312">nav.loan-application</span>
            <span class="ml-[48px]" data-w="375">nav.borrower-dashboard</span>
            <div class="ml-[126px] w-[138px] h-[72px] shrink-0 rounded-[12px] border-2 border-black flex items-center pl-[24px] text-[28px] font-medium text-black"><svg class="w-[32px] h-[32px]" viewBox="0 0 24 24"><g fill="none" stroke="currentColor" stroke-width="2"><circle cx="12" cy="12" r="10"/><path d="M12 2a14.500 14.500 0 0 0 0 20 14.500 14.500 0 0 0 0-20M2 12h20"/></g></svg><span class="ml-[15px]" data-w="39">EN</span></div>
            <span class="ml-[44px] text-[28px] font-medium text-black" data-w="39">DB</span>
          </div>

          <div class="relative ml-[66px] mt-[38px] w-[1812px] h-[1200px] border-4 border-[#0a6fe8] flex flex-col">
            <div class="absolute -top-[46px] left-[6px] w-[83px] h-[44px] rounded-[8px] bg-[#006cf0] shadow-[0_4px_6px_rgba(0,0,0,.2)] text-white font-['DejaVu_Sans_Mono',monospace] text-[27px] flex items-center justify-center"><span class="-mt-[2px]" data-w="50">div</span></div>
            <h1 class="mt-[6px] h-[72px] shrink-0 flex items-center justify-center text-[60px] font-bold text-[#1f2733]"><span data-w="500">Demande de Prêt</span></h1>
            <p class="mt-[31px] h-[56px] shrink-0 flex items-center justify-center text-[40px] text-[#475063]"><span data-w="1211">Complétez le formulaire pour obtenir une évaluation instantanée</span></p>

            <!-- Form card -->
            <div class="mt-[65px] ml-[6px] w-[1792px] h-[1000px] shrink-0 rounded-[20px] border-2 border-black bg-[#f8f9fb] px-[48px] pt-[48px] text-[28px]">
              <div class="h-[48px] flex items-center text-[48px] font-semibold"><svg class="w-[40px] h-[40px] shrink-0" viewBox="0 0 24 24"><path d="M12 2v20M17 5H9.500a3.500 3.500 0 0 0 0 7h5a3.500 3.500 0 0 1 0 7H6" fill="none" stroke="currentColor" stroke-width="1.900" stroke-linecap="round"/></svg><span class="ml-[16px]" data-w="449">Informations de Prêt</span></div>
              <div class="mt-[59px] h-[28px] flex items-center font-medium"><span class="w-[862px]"><span data-w="260">Montant du prêt (€)</span></span><span data-w="172">Durée (mois)</span></div>
              <div class="mt-[25px] flex gap-[32px]">
                <div class="w-[830px] h-[80px] rounded-[12px] border-2 border-black flex items-center pl-[24px]"><span data-w="87">25000</span></div>
                <div class="w-[830px] h-[80px] rounded-[12px] border-2 border-black flex items-center justify-between pl-[24px] pr-[30px]"><span data-w="101">12 mois</span><svg class="w-[21px] h-[13px]" viewBox="0 0 21 13"><path d="M2 2l8.500 8.500L19 2" fill="none" stroke="#6b6e73" stroke-width="2.600" stroke-linecap="round" stroke-linejoin="round"/></svg></div>
              </div>
              <div class="mt-[59px] h-[28px] flex items-center font-medium"><span data-w="175">Objet du prêt</span></div>
              <div class="mt-[25px] w-[1692px] h-[200px] rounded-[12px] border-2 border-black flex pl-[24px] pt-[22px] relative"><span class="leading-[32px] self-start" data-w="528">Décrivez l'utilisation prévue des fonds...</span><svg class="absolute right-[1px] bottom-[1px] w-[16px] h-[16px]" viewBox="0 0 16 16"><path d="M1 15L15 1M9 15l6-6" stroke="#55585e" stroke-width="1.600"/></svg></div>

              <div class="relative mt-[44px] -ml-[4px] w-[1700px] h-[400px] border-4 border-dashed border-[#0a6fe8]">
                <div class="absolute -top-[52px] left-0 w-[83px] h-[44px] rounded-[8px] bg-[#006cf0] shadow-[0_3px_6px_rgba(0,0,0,.2)] text-white font-['DejaVu_Sans_Mono',monospace] text-[27px] flex items-center justify-center"><span class="-mt-[2px]" data-w="50">div</span></div>
                <div class="h-[392px] border-t-2 border-black bg-[#e6edf9]">
                  <div class="pt-[56px] h-[96px] box-border flex items-center text-[36px] font-semibold text-[#1f2a3d]"><svg class="w-[40px] h-[40px] shrink-0" viewBox="0 0 24 24"><g fill="none" stroke="currentColor" stroke-width="1.900" stroke-linecap="round" stroke-linejoin="round"><rect x="4" y="2" width="16" height="20" rx="2"/><path d="M8 6h8M16 14v4M16 10h.01M12 10h.01M8 10h.01M12 14h.01M8 14h.01M12 18h.01M8 18h.01"/></g></svg><span class="ml-[16px]" data-w="432">Informations Financières</span></div>
                  <div class="mt-[51px] h-[28px] flex items-center font-medium text-[#0a0f1c]"><span class="w-[862px]"><span data-w="273">Revenus annuels (€)</span></span><span data-w="421">Dettes actuelles mensuelles (€)</span></div>
                  <div class="mt-[25px] flex gap-[32px] text-[#0a0f1c]">
                    <div class="w-[830px] h-[80px] rounded-[12px] border-2 border-black flex items-center pl-[24px]"><span data-w="88">45000</span></div>
                    <div class="w-[830px] h-[80px] rounded-[12px] border-2 border-black flex items-center pl-[24px]"><span data-w="53">800</span></div>
                  </div>
                </div>
              </div>
            </div>
          </div>
          <div class="absolute inset-x-0 bottom-0 h-[90px] bg-linear-to-b from-black/0 to-black/8"></div>
          <svg class="absolute left-[516px] top-[1179px] w-[26px] h-[40px]" viewBox="0 0 26 40"><path d="M3 2v28l6.500-6 4.500 11 5-2-4.500-10.500H24z" fill="#000" stroke="#fff" stroke-width="2.400" stroke-linejoin="round"/></svg>
        </div>
      </section>
    </div>
  </div>
</div>

<!-- Dock -->
<footer class="h-[125px] pt-[7px] flex justify-center bg-linear-to-r from-[#132418] via-[#191d17] to-[#10191a]">
  <div class="w-[2796px] h-[108px] rounded-[36px] border-2 border-white/20 pl-[5px] flex bg-[linear-gradient(90deg,#4e6158_0%,#566c58_16%,#5c5b5b_28%,#554e4b_38%,#604f45_45%,#586459_54%,#56695a_62%,#5f6963_70%,#617268_76%,#5b6f5a_84%,#86694f_91%,#5e5753_96%,#4b4f4d_100%)]">
    <div class="w-[90px] shrink-0 flex flex-col items-center pt-[14px]"><svg class="w-[70px] h-[70px]" viewBox="0 0 70 70"><g clip-path="url(#tile)"><rect width="70" height="70" fill="url(#gBlueDown)"/><path d="M38 0C31 14 29 28 30 41h8c0 10 1 20 5 29h27V0z" fill="#e4e8ef"/><path d="M18 20v7M51 20v7" stroke="#14213a" stroke-width="3" stroke-linecap="round"/><path d="M13 46c11 13 33 13 43 0" fill="none" stroke="#14213a" stroke-width="2.500" stroke-linecap="round"/></g></svg><i class="mt-[10px] size-[8px] rounded-full bg-black"></i></div>
    <div class="w-[90px] shrink-0 flex flex-col items-center pt-[14px]"><svg class="w-[70px] h-[70px]" viewBox="0 0 70 70"><rect width="70" height="70" rx="16" fill="#bcc4c1"/><rect x="11" y="12" width="13" height="13" rx="3" fill="#4fd32e"/><rect x="28.500" y="12" width="13" height="13" rx="3" fill="#fdb51c"/><rect x="46" y="12" width="13" height="13" rx="3" fill="#f78a12"/><rect x="11" y="29" width="13" height="13" rx="3" fill="#d31f1f"/><rect x="28.500" y="29" width="13" height="13" rx="3" fill="#8a9095"/><rect x="46" y="29" width="13" height="13" rx="3" fill="#fb3a55"/><rect x="11" y="46" width="13" height="13" rx="3" fill="#9a3fd0"/><rect x="28.500" y="46" width="13" height="13" rx="3" fill="#1e87f6"/><rect x="46" y="46" width="13" height="13" rx="3" fill="#36c3a0"/></svg></div>
    <div class="relative w-[90px] shrink-0 flex flex-col items-center pt-[14px]"><svg class="w-[70px] h-[70px]" viewBox="0 0 70 70"><rect width="70" height="70" rx="16" fill="url(#gGreen)"/><path d="M35 12c15 0 26 9.500 26 22S50 56 35 56c-3 0-6-.4-8.500-1.200C24.500 57 21.500 58 18.500 58c1.800-1.800 2.400-4 2.300-6C13.500 48 9 42 9 34 9 21.500 20 12 35 12z" fill="url(#gGlass)"/></svg><i class="mt-[10px] size-[8px] rounded-full bg-black"></i><b class="absolute right-[2px] top-[1px] size-[34px] rounded-full bg-[#ec3a31] text-white text-[20px] font-normal leading-[34px] text-center tracking-tight">19</b></div>
    <div class="w-[90px] shrink-0 flex flex-col items-center pt-[14px]"><svg class="w-[70px] h-[70px]" viewBox="0 0 70 70"><rect width="70" height="70" rx="16" fill="url(#gBlue)"/><rect x="10" y="19" width="50" height="32" rx="3" fill="#f1f0ee"/><path d="M11 50l18-17M59 50L41 33M11 20l20 20c2.500 2.500 5.500 2.500 8 0l20-20" fill="none" stroke="#8d8d8d" stroke-width="1.500"/></svg></div>
    <div class="w-[90px] shrink-0 flex flex-col items-center pt-[14px]"><svg class="w-[70px] h-[70px]" viewBox="0 0 70 70"><rect width="70" height="70" rx="16" fill="#f6f6f4"/><path d="M35 35L9.020 20A30 30 0 0 1 60.980 20z" fill="#e33b2e"/><path d="M35 35L60.980 20A30 30 0 0 1 35 65z" fill="#fbbc15"/><path d="M35 35v30A30 30 0 0 1 9.020 20z" fill="#1f9d49"/><path d="M35 20h26L48 42zM22 42L9 20h26z" fill="#e33b2e"/><path d="M9 20l13 22.500L35 35z" fill="#1f9d49"/><path d="M48 42.500L35 65l8-22z" fill="#fbbc15"/><circle cx="35" cy="35" r="14.500" fill="#fff"/><circle cx="35" cy="35" r="11.500" fill="#2b6be6"/></svg><i class="mt-[10px] size-[8px] rounded-full bg-black"></i></div>
    <div class="w-[90px] shrink-0 flex flex-col items-center pt-[14px]"><svg class="w-[70px] h-[70px]" viewBox="0 0 70 70"><g clip-path="url(#tile)"><rect width="70" height="70" fill="#4cce5f"/><path d="M0 22l70 44v4H0z" fill="#f0f1f3"/><path d="M0 36l22 34H0z" fill="#ee7fc9"/><path d="M38 70V54l18 16z" fill="#fbc312"/><circle cx="70" cy="0" r="24" fill="none" stroke="#dfe2e6" stroke-width="7"/><path d="M17 0h20v70H17z" fill="#dcdfe5"/><path d="M19.500 0h15v36h-15z" fill="#2274f2"/><circle cx="27" cy="44" r="18" fill="#f3f5f8"/><circle cx="27" cy="44" r="15" fill="#1a76f5"/><path d="M27 33l8.500 20-8.500-4-8.500 4z" fill="#fff"/></g></svg></div>
    <div class="w-[90px] shrink-0 flex flex-col items-center pt-[14px]"><svg class="w-[70px] h-[70px]" viewBox="0 0 70 70"><rect width="70" height="70" rx="16" fill="#fbfbfb"/><g opacity=".85"><rect x="26" y="5" width="18" height="29" rx="9" fill="#ff9a1f"/><rect x="26" y="5" width="18" height="29" rx="9" fill="#e8d71f" transform="rotate(45 35 35)"/><rect x="26" y="5" width="18" height="29" rx="9" fill="#a5cf2f" transform="rotate(90 35 35)"/><rect x="26" y="5" width="18" height="29" rx="9" fill="#4fbf83" transform="rotate(135 35 35)"/><rect x="26" y="5" width="18" height="29" rx="9" fill="#4f9be0" transform="rotate(180 35 35)"/><rect x="26" y="5" width="18" height="29" rx="9" fill="#7a72cf" transform="rotate(225 35 35)"/><rect x="26" y="5" width="18" height="29" rx="9" fill="#c668b0" transform="rotate(270 35 35)"/><rect x="26" y="5" width="18" height="29" rx="9" fill="#f8453b" opacity=".9" transform="rotate(315 35 35)"/></g></svg></div>
    <div class="w-[90px] shrink-0 flex flex-col items-center pt-[14px]"><svg class="w-[70px] h-[70px]" viewBox="0 0 70 70"><rect width="70" height="70" rx="16" fill="url(#gGreen)"/><rect x="11" y="20" width="33" height="31" rx="8" fill="url(#gGlass)"/><path d="M47 31l9-8c1.500-1.300 3-.6 3 1.500v22c0 2-1.500 2.800-3 1.500l-9-8z" fill="url(#gGlass)"/></svg></div>
    <div class="w-[90px] shrink-0 flex flex-col items-center pt-[14px]"><div class="w-[70px] h-[70px] rounded-[16px] bg-[#fafafa] overflow-hidden text-center"><div class="h-[22px] bg-[#ee4a44] text-white text-[15px] font-semibold leading-[23px]">AOÛT</div><div class="text-[#222] text-[40px] leading-[44px] font-light tracking-tight">11</div></div></div>
    <div class="w-[90px] shrink-0 flex flex-col items-center pt-[14px]"><svg class="w-[74px] h-[70px]" viewBox="0 0 74 70"><rect x="60" y="10" width="12" height="12" rx="3" fill="#d5d2cc"/><rect x="60" y="24" width="12" height="12" rx="3" fill="#3f9fd8"/><rect x="60" y="37" width="12" height="12" rx="3" fill="#f29a38"/><rect x="60" y="50" width="12" height="12" rx="3" fill="#4fc45c"/><rect width="69" height="70" rx="15" fill="#ab7536"/><rect width="8" height="70" rx="4" fill="#9a672c"/><g fill="none" stroke="#86592a" stroke-width="1.600"><circle cx="36" cy="35" r="21"/></g><circle cx="36" cy="30" r="8" fill="#8a5c2b"/><path d="M21 49c4-12 26-12 30 0-7 9-23 9-30 0z" fill="#8a5c2b"/></svg></div>
    <div class="relative w-[90px] shrink-0 flex flex-col items-center pt-[14px]"><svg class="w-[70px] h-[70px]" viewBox="0 0 70 70"><rect width="70" height="70" rx="16" fill="#fbfbfa"/><g stroke="#c9c9c9" stroke-width="1.600"><path d="M27 17.500h36M27 35h36M27 52.500h36"/></g><g stroke-width="2" fill="none"><circle cx="14" cy="17.500" r="5.500" stroke="#1c77f4"/><circle cx="14" cy="35" r="5.500" stroke="#ef4136"/><circle cx="14" cy="52.500" r="5.500" stroke="#f59a23"/></g><circle cx="14" cy="17.500" r="3.500" fill="#1c77f4"/><circle cx="14" cy="35" r="3.500" fill="#ef4136"/><circle cx="14" cy="52.500" r="3.500" fill="#f59a23"/></svg><b class="absolute right-[2px] top-[5px] size-[34px] rounded-full bg-[#ec3a31] text-white text-[20px] font-normal leading-[34px] text-center">1</b></div>
    <div class="w-[90px] shrink-0 flex flex-col items-center pt-[14px]"><svg class="w-[70px] h-[70px]" viewBox="0 0 70 70"><g clip-path="url(#tile)"><rect width="70" height="70" fill="#f1f0eb"/><rect width="70" height="18" fill="#fdc21c"/><path d="M0 20.500h70" stroke="#b5b3ad" stroke-width="2" stroke-dasharray="1.500 1.500"/><path d="M0 35h70M0 52h70" stroke="#cfcdc7" stroke-width="1.500"/></g></svg><i class="mt-[10px] size-[8px] rounded-full bg-black"></i></div>
    <div class="w-[90px] shrink-0 flex flex-col items-center pt-[14px]"><svg class="w-[70px] h-[70px]" viewBox="0 0 70 70"><rect width="70" height="70" rx="16" fill="#fdfdfd"/><circle cx="28" cy="42" r="20" fill="#fb6347"/><rect x="23" y="9" width="38" height="39" rx="4" fill="#19bdf2" opacity=".92"/><path d="M13 45c6-10 12-22 17-20 4 2-4 14 0 16s8-18 13-14c3 3-4 13 1 14s9-3 17-8" fill="none" stroke="#15265c" stroke-width="3.500" stroke-linecap="round"/></svg></div>
    <div class="w-[90px] shrink-0 flex flex-col items-center pt-[14px]"><div class="w-[70px] h-[70px] rounded-[16px] bg-linear-to-b from-[#232c29] to-[#101514] text-white flex items-center justify-center"><svg class="w-[21px] h-[21px]"><use href="#apple"/></svg><span class="text-[27px] font-medium leading-none tracking-tight">tv</span></div></div>
    <div class="w-[90px] shrink-0 flex flex-col items-center pt-[14px]"><svg class="w-[70px] h-[70px]" viewBox="0 0 70 70"><rect width="70" height="70" rx="16" fill="url(#gRed)"/><path d="M50 11L28 15.500c-1.600.4-2.500 1.400-2.500 3V43c-1.500-.8-4-.8-6.500 0-3.500 1.200-5.500 4-5.500 7s2.700 5.500 6.500 5.500c5.500 0 9-4 9-9V27.500l19-4V39c-1.500-.8-4-.8-6.500 0-3.500 1.200-5.500 4-5.500 7s2.700 5 6.500 5c5.500 0 9-3.800 9-8.500V13c0-1.500-.8-2.200-2-2z" fill="#fff"/></svg></div>
    <div class="w-[90px] shrink-0 flex flex-col items-center pt-[14px]"><svg class="w-[70px] h-[70px]" viewBox="0 0 70 70"><rect width="70" height="70" rx="16" fill="url(#gBlueDown)"/><path d="M17 10h36l3 21H14z" fill="#f3f4f6"/><rect x="14" y="31" width="42" height="3" fill="#c3c8d0"/><circle cx="35" cy="18.500" r="6.500" fill="#f0473c"/><path d="M35 18.500V12a6.500 6.500 0 0 1 5.600 9.700z" fill="#38b54a"/><path d="M35 18.500l5.600 3.200a6.500 6.500 0 0 1-8.800 2.500z" fill="#2b8bf2"/><path d="M35 34v26M24 60.500h22" stroke="#e9ecf1" stroke-width="3"/></svg></div>
    <div class="w-[90px] shrink-0 flex flex-col items-center pt-[14px]"><svg class="w-[70px] h-[70px]" viewBox="0 0 70 70"><rect width="70" height="70" rx="16" fill="url(#gGreen)"/><g fill="#f3f6f3"><rect x="12" y="46" width="9.500" height="14" rx="2"/><rect x="24.500" y="33" width="9.500" height="27" rx="2"/><rect x="37" y="10" width="9.500" height="50" rx="2"/><rect x="49" y="23" width="9.500" height="37" rx="2"/></g></svg></div>
    <div class="w-[90px] shrink-0 flex flex-col items-center pt-[14px]"><svg class="w-[70px] h-[70px]" viewBox="0 0 70 70"><rect width="70" height="70" rx="16" fill="url(#gOrange)"/><path d="M56 13c2.500 1.500 2.500 3.500 1.500 5.500L22 55l-10 5 3.500-10.500L50 15c1.800-2 4-3 6-2z" fill="#f5f5f5"/><path d="M22 55l-6.500-5.500" stroke="#a7a7a7" stroke-width="1.500"/><path d="M25 60h34" stroke="#fde2c2" stroke-width="1.500"/></svg></div>
    <div class="w-[90px] shrink-0 flex flex-col items-center pt-[14px]"><svg class="w-[70px] h-[70px]" viewBox="0 0 70 70"><rect width="70" height="70" rx="16" fill="url(#gBlueDown)"/><g stroke="#f0f6ff" stroke-width="5.500" stroke-linecap="round" fill="none"><path d="M32 15l20 36M38 15L21 43M13.500 43H40M51 43h6M17.500 50l-2 4"/><path d="M52 51l2 3.500"/></g></svg></div>
    <div class="relative w-[90px] shrink-0 flex flex-col items-center pt-[14px]"><svg class="w-[70px] h-[70px]" viewBox="0 0 70 70"><rect width="70" height="70" rx="16" fill="#9fa5a7"/><circle cx="35" cy="35" r="29" fill="#3e4142"/><circle cx="35" cy="35" r="27" fill="none" stroke="#9b9fa1" stroke-width="3.500" stroke-dasharray="1.800 1.600"/><circle cx="35" cy="35" r="19.500" fill="none" stroke="#a6aaab" stroke-width="4"/><path d="M35 35L15 31M35 35l13-17M35 35l9 19" stroke="#a6aaab" stroke-width="4"/><circle cx="35" cy="35" r="6" fill="#a6aaab"/><circle cx="35" cy="35" r="2.800" fill="#3e4142"/></svg><b class="absolute right-[2px] top-[5px] size-[34px] rounded-full bg-[#ec3a31] text-white text-[20px] font-normal leading-[34px] text-center">1</b></div>
    <div class="w-[90px] shrink-0 flex flex-col items-center pt-[14px]"><svg class="w-[70px] h-[70px]" viewBox="0 0 70 70"><rect width="70" height="70" rx="16" fill="#bcc4bf"/><rect x="20" y="5" width="30" height="60" rx="6" fill="#111417"/><path d="M22.500 11a3.500 3.500 0 0 1 3.500-3.500h18a3.500 3.500 0 0 1 3.500 3.500v14C40 30 28 40 22.500 55z" fill="#f58f80"/><path d="M47.500 27v32a3.500 3.500 0 0 1-3.500 3.500H26a3.500 3.500 0 0 1-3.500-3.500C28 44 38 33 47.500 27z" fill="#167a8c"/><path d="M47.500 44v15a3.500 3.500 0 0 1-3.500 3.500H28C36 58 44 52 47.500 44z" fill="#0a3d52"/><rect x="29" y="8" width="12" height="4" rx="2" fill="#0a0c0e"/></svg></div>
    <div class="w-[92px] shrink-0 flex flex-col items-center pt-[11px]"><svg class="w-[76px] h-[76px]" viewBox="0 0 76 76"><circle cx="38" cy="38" r="38" fill="#0a559c"/><g stroke="#fff" stroke-width="4.600" stroke-linecap="round"><path d="M10 35.500v5M17 30v16M24 21v8M24 34v22M31 15v16M31 45v16M38 7v24M38 45v24M45 15v16M45 45v16M52 20v14M52 42v12M59 28v20M66 35.500v5"/></g><circle cx="38" cy="38" r="11" fill="#fff"/><circle cx="38" cy="38" r="3.400" fill="#0a559c"/></svg></div>
    <div class="w-[39px] shrink-0 flex justify-center"><i class="w-[2px] h-[80px] mt-[12px] bg-black/40"></i></div>
    <div class="w-[90px] shrink-0 flex flex-col items-center pt-[14px]"><svg class="w-[70px] h-[70px]" viewBox="0 0 70 70"><rect width="70" height="70" rx="16" fill="#fbfbfb"/><circle cx="36" cy="35" r="23.500" fill="#ed5b3c"/><path d="M36 11.500A23.500 23.500 0 0 1 59.500 35H36z" fill="#ff8f6b"/><path d="M59.500 35A23.500 23.500 0 0 1 36 58.500V35z" fill="#d35230"/><rect x="8" y="22" width="26" height="26" rx="3" fill="#bd3416"/><text x="21" y="42" font-size="20" font-weight="700" fill="#fff" text-anchor="middle" font-family="Inter">P</text></svg><i class="mt-[10px] size-[8px] rounded-full bg-black"></i></div>
    <div class="w-[90px] shrink-0 flex flex-col items-center pt-[14px]"><svg class="w-[76px] h-[76px] -mb-[6px] ml-[6px]" viewBox="0 0 76 76"><rect width="70" height="70" rx="16" fill="#f1f2f3"/><rect x="5" y="5" width="60" height="60" rx="12" fill="#8ab4ec"/><path d="M5 38h60v15a12 12 0 0 1-12 12H17A12 12 0 0 1 5 53z" fill="#1c2f66"/><path d="M5 52c8-2 10 6 20 3 5 4 8 6 8 10H17A12 12 0 0 1 5 55z" fill="#e8eaea"/><path d="M36 38h32v9c0 4-32 4-32 0z" fill="#0c0e10"/><ellipse cx="52" cy="38" rx="16" ry="4.500" fill="#2c2f32"/><path d="M39 50h26l6 19c1 3-1 5-4 5H37c-3 0-5-2-4-5z" fill="#c3c8cb" opacity=".92"/><path d="M43 58h13v10H43z" fill="#6f767b" transform="rotate(-12 50 64)"/><path d="M46 60h6v5h-6z" fill="#e9ebec" transform="rotate(-12 50 64)"/></svg><i class="mt-[10px] -ml-[0px] size-[8px] rounded-full bg-black"></i></div>
    <div class="w-[90px] shrink-0 flex flex-col items-center pt-[14px]"><svg class="w-[70px] h-[70px]" viewBox="0 0 70 70"><rect width="70" height="70" rx="16" fill="url(#gWhite)"/><circle cx="35" cy="35" r="30" fill="#1c86f2"/><circle cx="35" cy="35" r="26.500" fill="none" stroke="#d9ecff" stroke-width="4" stroke-dasharray="1 2.400"/><path d="M56 15L31.500 31.500l7 7z" fill="#f03e3a"/><path d="M14 55l17.500-23.500 7 7z" fill="#f4f6f8"/></svg><i class="mt-[10px] size-[8px] rounded-full bg-black"></i></div>
    <div class="w-[90px] shrink-0 flex flex-col items-center pt-[14px]"><svg class="w-[70px] h-[70px]" viewBox="0 0 70 70"><rect width="70" height="70" rx="16" fill="#fcfcfc"/><path d="M46 11.500L11 43.500l4.500 4L46 24.500zM46 58.500L11 26.500l4.500-4L46 45.500z" fill="#0f6fbe"/><path d="M46 11.500v47L58 53V17z" fill="#2a9df0"/></svg><i class="mt-[10px] size-[8px] rounded-full bg-black"></i></div>
    <div class="w-[90px] shrink-0 flex flex-col items-center pt-[14px]"><svg class="w-[70px] h-[70px] ml-[2px]" viewBox="0 0 70 70"><rect width="70" height="70" rx="16" fill="url(#gDark)"/><circle cx="35" cy="35" r="18" fill="#1590f7"/><circle cx="35" cy="31" r="9" fill="#44c6fd"/><circle cx="35" cy="35" r="22.500" fill="none" stroke="url(#gSilver)" stroke-width="11"/><path d="M37 39l10-3 15 26H50z" fill="#a4abb5"/></svg><i class="mt-[10px] size-[8px] rounded-full bg-black"></i></div>
    <div class="w-[46px] shrink-0 flex justify-center"><i class="w-[2px] h-[80px] mt-[12px] bg-black/40"></i></div>
    <div class="w-[80px] shrink-0 flex justify-center pt-[14px]"><svg class="w-[42px] h-[70px]" viewBox="0 0 42 70"><path d="M4 18C4 8 11 3 21 3s17 6 17 14c0 13-17 14-17 31" fill="none" stroke="#c9bcae" stroke-width="5.500" stroke-linecap="round"/><circle cx="21" cy="64" r="4.500" fill="#c9bcae"/></svg></div>
    <div class="w-[102px] shrink-0 flex justify-center pt-[25px]"><svg class="w-[82px] h-[64px]" viewBox="0 0 82 64"><rect width="81" height="49" fill="#fbfbfb"/><rect width="17" height="49" fill="#dcdcda"/><g stroke="#b5b5b3" stroke-width="1.500"><path d="M3 6h11M3 12h11M3 18h11M3 24h11M3 30h11M3 36h11M3 42h11M20 22h14M20 28h16M20 36h18M20 42h16"/></g><g stroke="#3f97f5" stroke-width="2.500"><path d="M71 7h8M74 13h5M72 20h7M73 27h6M68 34h11"/></g><rect x="54" y="37" width="26" height="26" rx="6" fill="#22c93f"/><ellipse cx="67" cy="49" rx="8.500" ry="7.500" fill="#e6f8e8"/></svg></div>
    <div class="w-[78px] shrink-0 flex justify-center pt-[9px]"><svg class="w-[62px] h-[80px]" viewBox="0 0 62 80"><path d="M6 8l8-6 8 4 7-5 10 4 8-3 9 7 2 7H4z" fill="#e8e9ea"/><path d="M14 4l6 8M26 3l5 9M40 3l-3 9M50 6l-4 8" stroke="#555" stroke-width="3"/><path d="M22 8l5 3" stroke="#3f8f5a" stroke-width="3"/><path d="M1 11c10 5 50 5 60 0l-7 61c-.5 4-8 7-23 7S8.500 76 8 72z" fill="#d9dad9"/><path d="M1 11c10 5 50 5 60 0" fill="none" stroke="#fff" stroke-width="2"/><path d="M15 22l4 48M30 24v48M46 22l-4 48" stroke="#c4c6c5" stroke-width="4" opacity=".6"/></svg></div>
  </div>
</footer>

<script>
  // Adjusts the tracking of each label so that it fills its design width.
  function fitLabels() {
    document.querySelectorAll('[data-w]').forEach(function (el) {
      el.style.display = 'inline-block';
      el.style.flexShrink = '0';
      el.style.whiteSpace = 'pre';
      el.style.letterSpacing = '0px';
      var target = Number(el.dataset.w);
      var natural = el.getBoundingClientRect().width;
      el.style.letterSpacing = ((target - natural) / el.textContent.length).toFixed(3) + 'px';
    });
  }
  window.addEventListener('load', function () {
    fitLabels();
    document.fonts.ready.then(fitLabels);
    requestAnimationFrame(fitLabels);
  });
</script>
</body>
</html>
